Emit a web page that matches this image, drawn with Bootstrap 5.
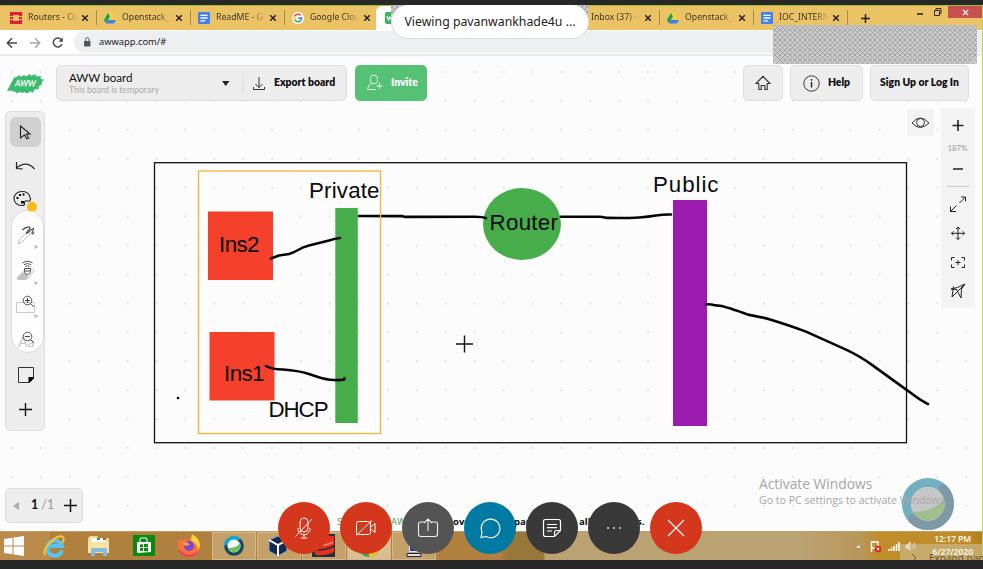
<!DOCTYPE html>
<html lang="en">
<head>
<meta charset="utf-8">
<meta name="viewport" content="width=device-width, initial-scale=1">
<title>AWW board</title>
<link rel="stylesheet" href="https://cdn.jsdelivr.net/npm/bootstrap@5.3.0/dist/css/bootstrap.min.css">
<style>
body{height:569px;width:983px;overflow:hidden;background:#272727;font-family:"Noto Sans","Open Sans",sans-serif;color:#111}
svg{display:block;flex-shrink:0}
.edge-top{height:5px}
.screen{height:555px;border-top:1px solid #9dc02c;border-right:1px solid #b4d84c;background:#fcfcfc}
.tabstrip{height:24px;background:#ebc365}
.tab-item{width:94px;padding-left:10px;position:relative;font-size:8.7px;color:#3d3828}
.tab-item .tab-label{width:49px;margin-left:6px;overflow:hidden;white-space:nowrap;-webkit-mask-image:linear-gradient(90deg,#000 75%,transparent)}
.tab-item .tab-x{margin-left:4px}
.tab-item.sep::after{content:"";position:absolute;right:-3px;top:4px;width:1px;height:15px;background:#a58d50}
.tab-live{width:187px;background:#fcfcfc;border-radius:6px 6px 0 0;padding-left:9px}
.win-close{width:34px;height:12px;background:#c75050}
.addr{height:26px;border-bottom:2px solid #e9ebec;background:#fff}
.omni{height:22px;background:#eeeff1;border-radius:11px 0 0 11px;font-size:9.3px;padding-left:9px;color:#222}
.board{height:475px;font-family:Lato,sans-serif}
.canvas{position:absolute;left:0;top:0}
.canvas text{font-family:"Liberation Sans",Arial,sans-serif;font-size:22.3px;fill:#0a0a0a}
.canvas .foot{font-family:"Open Sans",sans-serif;font-size:9.5px;font-weight:700}
.canvas .foot-link{fill:#3c9f55;font-weight:400}
.panel{background:#ededed;border:1px solid #dedede;border-radius:5px}
.topbar{height:36px;margin-top:9px;padding:0 13px 0 7px;font-size:10.4px;font-weight:800}
.board-name{font-size:11.6px;font-weight:400;line-height:13px}
.board-note{font-size:8.7px;font-weight:400;color:#aaa;line-height:12px}
.board-pick{width:291px;margin-left:12px}
.invite{background:#55c174;color:#fff;border-radius:5px;width:72px}
.tools{width:40px;height:320px;margin:10px 0 0 5px}
.tool-on{width:31px;height:30px;background:#d0d0d0;border-radius:6px;margin:5px 0 0 4px}
.tool-pill{width:33px;height:143px;background:#fdfdfd;border:1px solid #ddd;border-radius:17px;margin-left:5px;margin-top:-1px}
.soft{background:#f3f3f3}
.eye-btn{width:27px;height:27px;margin:8px 7px 0 0}
.zoomer{width:34px;height:200px;margin:7px 7px 0 0}
.pager{width:78px;height:35px;margin:57px 0 0 5px;font-size:12.5px;font-weight:700}
.page-total{color:#999;font-weight:400;margin-left:3px}
.taskbar{height:28.5px;border-top:1px solid #c49d63;background:linear-gradient(70deg,transparent 0 86%,#c08b20 89%,#b07f25 100%) right/160px 100% no-repeat,linear-gradient(90deg,#ba8b4a 0 50px,#b0803f 50px 500px,#98783a 508px 544px,#bba273 545px 800px,#b9975a 860px,#bf8d29 880px)}
.cell{width:45px;height:28px}
.cell.start{width:31.5px;padding-right:4px}
.cell.open{border:1px solid #d3b78c;background:#c6a069;width:44px;margin-right:1px}
.cell.open.current{background:#d8bf91}
.clock{font-size:8.5px;line-height:12.5px;color:#fff;font-family:"Open Sans",sans-serif;font-weight:600;position:relative;z-index:3}
.hatch{background-color:#cbcbcb;background-image:repeating-linear-gradient(45deg,#a3a3a3 0 .7px,transparent .7px 3.54px),repeating-linear-gradient(-45deg,#a3a3a3 0 .7px,transparent .7px 3.54px)}
.redact{position:absolute;left:773px;top:25px;width:204px;height:39px}
.viewing-wrap{position:absolute;left:391px;top:5px;width:197px;height:17px}
.viewing{position:absolute;left:391px;top:5px;width:198px;height:34px;border-radius:17px;background:#fff;border:1px solid #ddd;border-top:0;font-size:12.3px;white-space:nowrap;color:#222;padding-top:2px}
.call{position:absolute;left:278px;top:502px;gap:10px}
.round{width:52px;height:52px;border-radius:50%;background:#393939}
.round.red{background:#d4371c}.round.gray{background:#545454}.round.blue{background:#007aa3}
.wm{position:absolute;left:759px;top:475px;color:#a6a6a6;font-family:"Open Sans",sans-serif;line-height:17px;white-space:nowrap}
.wm-a{font-size:13.8px}.wm-b{font-size:10.6px}
.ball{position:absolute;left:902px;top:478px}
.expand{position:absolute;left:900px;top:544px;width:83px;height:16px;background:rgba(205,190,150,.6);font-size:10px;color:#6c5a31;overflow:hidden;white-space:nowrap;padding:8px 0 0 11px;gap:12px;line-height:13px}
</style>
<script src="https://cdn.jsdelivr.net/npm/bootstrap@5.3.0/dist/js/bootstrap.bundle.min.js"></script>
</head>
<body class="position-relative">
<svg width="0" height="0" class="position-absolute">
<defs>
<symbol id="x" viewBox="0 0 8 8"><path d="M1.2 1.2l5.6 5.6M6.8 1.2L1.2 6.8" stroke="#252018" stroke-width="1.5"/></symbol>
<symbol id="drive" viewBox="0 0 12 11"><path d="M4 0h4l-4 7-2 3.6L0 7z" fill="#12a15f"/><path d="M4 0h4l4 7H8z" fill="#fbcf44"/><path d="M4 7h8l-2 3.6H2z" fill="#4280e8"/><path d="M6 3.5L8 7H4z" fill="#ebc365"/></symbol>
<symbol id="doc" viewBox="0 0 12 12"><rect width="12" height="12" rx="1" fill="#4280ee"/><path d="M2.4 3.3h7.2M2.4 6h7.2M2.4 8.8h4.8" stroke="#fff" stroke-width="1.3"/></symbol>
</defs>
</svg>
<div class="edge-top"></div>
<div class="screen d-flex flex-column">
  <div class="tabstrip d-flex flex-shrink-0">
    <div class="tab-item sep d-flex align-items-center"><svg width="12" height="12" viewBox="0 0 12 12"><path d="M0 0h12v4H9V3H3v1H0zM0 5h3v2H0zM9 5h3v2H9zM0 8h3v1h6V8h3v4H0z" fill="#e11d39"/></svg><span class="tab-label">Routers - Op</span><svg class="tab-x" width="8" height="8"><use href="#x"/></svg></div>
    <div class="tab-item sep d-flex align-items-center"><svg width="12" height="11"><use href="#drive"/></svg><span class="tab-label">Openstack_I</span><svg class="tab-x" width="8" height="8"><use href="#x"/></svg></div>
    <div class="tab-item sep d-flex align-items-center"><svg width="12" height="12"><use href="#doc"/></svg><span class="tab-label">ReadME - Go</span><svg class="tab-x" width="8" height="8"><use href="#x"/></svg></div>
    <div class="tab-item d-flex align-items-center"><svg width="12" height="12" viewBox="0 0 12 12"><circle cx="6" cy="6" r="6" fill="#fff"/><g fill="none" stroke-width="1.6"><path d="M8.6 3.3A3.7 3.7 0 0 0 2.8 4.2" stroke="#ea4335"/><path d="M2.8 4.2a3.7 3.7 0 0 0 0 3.6" stroke="#fbbc05"/><path d="M2.8 7.8a3.7 3.7 0 0 0 5.6 1" stroke="#34a853"/><path d="M8.4 8.8A3.5 3.5 0 0 0 9.7 6.1H6.2" stroke="#4285f4"/></g></svg><span class="tab-label">Google Clou</span><svg class="tab-x" width="8" height="8"><use href="#x"/></svg></div>
    <div class="tab-live d-flex align-items-center"><svg width="12" height="12" viewBox="0 0 12 12"><rect width="12" height="12" rx="2" fill="#35b35e"/><path d="M2 4l1.500 4L5 5l1.500 3L9 3" fill="none" stroke="#fff" stroke-width="1.2"/></svg></div>
    <div class="tab-item sep d-flex align-items-center"><svg width="12" height="12"></svg><span class="tab-label">Inbox (37) - g</span><svg class="tab-x" width="8" height="8"><use href="#x"/></svg></div>
    <div class="tab-item sep d-flex align-items-center"><svg width="12" height="11"><use href="#drive"/></svg><span class="tab-label">Openstack_I</span><svg class="tab-x" width="8" height="8"><use href="#x"/></svg></div>
    <div class="tab-item sep d-flex align-items-center"><svg width="12" height="12"><use href="#doc"/></svg><span class="tab-label">IOC_INTERN</span><svg class="tab-x" width="8" height="8"><use href="#x"/></svg></div>
    <div class="d-flex align-items-center ps-3"><svg class="ms-n1" width="9" height="9" viewBox="0 0 9 9"><path d="M4.500 0v9M0 4.500h9" stroke="#252018" stroke-width="1.500"/></svg></div>
    <div class="ms-auto d-flex align-items-start"><svg class="me-1" width="30" height="14" viewBox="0 0 30 14"><path d="M3 8h6" stroke="#332a18" stroke-width="1.600"/><path d="M20.500 4.500h5v5h-5zM22 4.500v-2h5v5h-1.500" fill="none" stroke="#332a18"/></svg><div class="win-close d-flex align-items-center justify-content-center"><svg width="7" height="7" viewBox="0 0 8 8"><path d="M1 1l6 6M7 1L1 7" stroke="#fff" stroke-width="1.600"/></svg></div></div>
  </div>
  <div class="addr d-flex align-items-center flex-shrink-0">
    <svg width="74" height="22" viewBox="0 0 74 22" fill="none" stroke-width="1.500"><path d="M17 12H7.500M12 7.300L7.300 12l4.700 4.700" stroke="#47494c"/><path d="M30 12h9.500M35 7.300l4.700 4.700-4.700 4.700" stroke="#a5a7aa"/><path d="M61.600 9A4.500 4.500 0 1 0 62 13" stroke="#47494c"/><path d="M62.800 6.500v4.200h-4.200z" fill="#47494c" stroke="none"/></svg>
    <div class="omni flex-grow-1 d-flex align-items-center"><svg width="8" height="10" viewBox="0 0 8 10"><rect x="1" y="4" width="6.500" height="5.500" rx=".7" fill="#555"/><path d="M2.500 4V2.500a1.700 1.700 0 0 1 3.500 0V4" fill="none" stroke="#555"/></svg><span class="ms-2">awwapp.com/#</span></div>
  </div>
  <div class="board position-relative flex-shrink-0">
    <svg class="canvas" width="982" height="475" viewBox="0 56 982 475">
      <defs><pattern id="dots" x="11" y="71" width="28.920" height="28.920" patternUnits="userSpaceOnUse"><path d="M0 .2h1.600v1.600H0z" fill="#d6d6d6"/></pattern></defs>
      <rect y="68" width="982" height="463" fill="url(#dots)"/>
      <rect x="154.500" y="162.700" width="752" height="280" fill="none" stroke="#111" stroke-width="1.300"/>
      <path fill="#f5402c" d="M208 211.500h65v68.500h-65zM209.500 332h65v68.500h-65z"/>
      <path fill="#47ad4a" d="M335.300 208h22.500v215h-22.500z"/>
      <ellipse cx="522" cy="224" rx="39" ry="36" fill="#47ad4a"/>
      <path fill="#9b1bae" d="M673 200h34v226h-34z"/>
      <g fill="none" stroke="#050505" stroke-width="2.600" stroke-linecap="round" stroke-linejoin="round">
        <path d="M271 258.500q4-1.500 8-3l10-1.500q4-1 9-4t11-4.500l20-5q6-2 11-2.500"/>
        <path d="M266 366q6 3.500 17 3.500 15 1 26 4.500 14 5 21 5.700 8 .8 14 0l.5-1.500"/>
        <path d="M359 216l43 .1 3 .8 70-.2q8 0 11 1.500"/>
        <path d="M561 216.700h39q4 .3 7 1.200 30 .8 49-2.400 8-1.200 15-1"/>
        <path d="M706 304.300q5-.2 8 .8 8 .3 15 3 12 4 19 6.500 14 2.500 22 5 15 4.500 36 12 20 9 40 18 15 7 27 16l36 26q10 8 19 12.500"/>
      </g>
      <path d="M456 344h17M464.500 335.500v17" stroke="#111" stroke-width="1.400"/>
      <circle cx="178" cy="398" r="1.300"/>
      <text x="309" y="197.800" textLength="70.500">Private</text>
      <text x="653" y="192" textLength="65.500">Public</text>
      <text x="489.500" y="229.800" textLength="68.500">Router</text>
      <text x="219" y="251.500" textLength="40.500">Ins2</text>
      <text x="224" y="380.900" textLength="40.500">Ins1</text>
      <text x="268.500" y="416.800" textLength="60">DHCP</text>
      <rect x="198.500" y="171" width="182" height="262.500" fill="none" stroke="#f2b631" stroke-width="1.300"/>
      <text class="foot foot-link" x="337" y="524.500">S</text><text class="foot foot-link" x="391" y="524.500">AW</text>
      <text class="foot" x="453" y="524.500">ove</text><text class="foot" x="514" y="524.500">par</text><text class="foot" x="579" y="524.500">all</text><text class="foot" x="637" y="524.500">s.</text>
    </svg>
    <div class="position-relative">
      <div class="topbar d-flex align-items-center">
        <svg width="37" height="20" viewBox="0 0 37 20"><path d="M0 18L7 4.500l3-.5q1-2 2-1.500l2.500 1.200L17 2l2 1.500L23 1l1.500 2 4-2 .5 2.500 5-.5-.5 3 3.500.5-2.500 3 .5 2-3.500 2 .5 2.500-4.500.5-2 3.500-2.500-2-3 3-2-2-3.500 1-1.500-1.500-3 2-2-2-3 .5L7 19l-2-1.500z" fill="#39bb70"/><text x="8" y="13.500" transform="rotate(2 18 10)" font-family="Lato,sans-serif" font-size="9" font-weight="700" font-style="italic" fill="#fff" textLength="21" lengthAdjust="spacingAndGlyphs">AWW</text></svg>
        <div class="panel board-pick h-100 d-flex align-items-center ps-2">
          <div style="width:152px" class="ms-1"><div class="board-name">AWW board</div><div class="board-note">This board is temporary</div></div>
          <svg width="53" height="30" viewBox="0 0 53 30"><path d="M1 13h7.500L4.700 18z" fill="#222"/><path d="M22 5v20" stroke="#ddd"/><path d="M38 9v10.500M34.500 16l3.500 3.600 3.500-3.600M32.500 19v2.500h11V19" fill="none" stroke="#333"/></svg>
          <span class="text-nowrap">Export board</span>
        </div>
        <div class="invite h-100 d-flex align-items-center ms-2 ps-2"><svg class="ms-1" width="16" height="18" viewBox="0 0 16 18" fill="none" stroke="#e8ffee" stroke-width="1"><ellipse cx="7" cy="5.500" rx="3.600" ry="4.300"/><path d="M5.500 9.300q-4.500 1.200-4.800 6.200H9M12.500 9v6M9.500 12h6"/></svg><span class="ms-2">Invite</span></div>
        <div class="ms-auto panel h-100 d-flex align-items-center justify-content-center" style="width:40px"><svg width="16" height="16" viewBox="0 0 16 16" fill="none" stroke="#333" stroke-width="1.100"><path d="M1 8.500L8 1.300l7 7.200h-2.800v6H9.800v-4H6.200v4H3.800v-6z"/></svg></div>
        <div class="panel h-100 d-flex align-items-center justify-content-center mx-2" style="width:73px;margin:0 7px!important"><svg width="17" height="17" viewBox="0 0 17 17"><circle cx="8.500" cy="8.500" r="7.700" fill="none" stroke="#333"/><path d="M8.500 4v1.700M8.500 7v5.500" stroke="#222" stroke-width="1.400"/></svg><span class="ms-2">Help</span></div>
        <div class="panel h-100 d-flex align-items-center justify-content-center" style="width:99px">Sign Up or Log In</div>
      </div>
      <div class="d-flex align-items-start">
        <div class="tools panel">
          <div class="tool-on d-flex justify-content-center align-items-center"><svg width="13" height="15" viewBox="0 0 13 15"><path d="M1.500 1l9.500 8H7.500l2.200 4-2 .9-2-4-4.200 3z" fill="none" stroke="#222" stroke-width="1.100"/></svg></div>
          <svg width="38" height="64" viewBox="0 0 38 64"><path d="M10.500 21q10-8 18 1M10.500 15v6.500l6 .3" fill="none" stroke="#222" stroke-width="1.200"/><path d="M16 44.500c-5 0-8 3.200-8 7s3 7 7.500 7c4 0 3-1.500 3-3s1.500-2 3-1.500c3 1 3.500-1.500 2.500-4-1-3.500-4-5.500-8-5.500z" fill="none" stroke="#222" stroke-width="1.100"/><path d="M10.500 50h2v2h-2zM13 47h2v2h-2zM16.500 46.500h2v2h-2zM15 54h3v2.500h-3z"/><circle cx="26" cy="60" r="5" fill="#fbba10"/></svg>
          <div class="tool-pill">
            <svg width="31" height="141" viewBox="0 0 31 141" fill="none">
              <path d="M6 33l1.500-4.500 8-8 2.500 2.500-8 8z" stroke="#c4c4c4"/><path d="M10.500 19c3-3 8-4 7.500-2s-4.500 5-3.500 5.500c2 0 6-6 7-5s-2.500 4-1.500 5 1.500-.5 2-1.500" stroke="#444" stroke-width="1.100"/>
              <path d="M22.500 34l4 2-4 2zM22.500 70l4 2-4 2zM22.500 103l4 2-4 2z" fill="#bbb"/>
              <path d="M4.500 67l6-6 6.500 4-2.500 4H6z" fill="#c2c2c2"/><path d="M10.500 61l6-4.500 5.500 3-5 7.500" stroke="#ccc"/><path d="M12.500 57.500h6v3q0 3-3 3t-3-3zM12.500 60h6M13.500 55.500q2-1.500 4 0M12 53.700q3.500-2.500 7 0M10.500 52q5-3.500 10 0" stroke="#555"/>
              <path d="M4.500 91.500h18v10h-18z" stroke="#c9c9c9"/><circle cx="15.500" cy="89.500" r="4.300" stroke="#555"/><path d="M13 89.500h5M15.500 87v5M18.500 92.500l3.500 3.500" stroke="#444"/>
              <text x="6" y="136" font-family="Lato,sans-serif" font-size="14" fill="#c4c4c4">Aa</text><circle cx="15.500" cy="125.500" r="4.300" stroke="#555"/><path d="M13 125.500h5M18.500 128.500l3.500 3.500" stroke="#444"/>
            </svg>
          </div>
          <svg width="38" height="75" viewBox="0 0 38 75"><path d="M12.500 14.500h15v11l-4 4h-11z" fill="none" stroke="#333"/><path d="M27.500 24v1.500l-4 4h-1V24z" fill="#000"/><path d="M19.500 50v13M13 56.500h13" stroke="#111" stroke-width="1.400"/></svg>
        </div>
        <div class="soft eye-btn d-flex align-items-center justify-content-center ms-auto"><svg width="19" height="12" viewBox="0 0 19 12" fill="none" stroke="#333"><path d="M1 6q8-10 17 0-9 9-17 0z"/><circle cx="9.500" cy="5.500" r="4"/></svg></div>
        <div class="soft zoomer"><svg width="34" height="200" viewBox="0 0 34 200" fill="none" stroke="#222"><path d="M11.500 17.500h11M17 12v11M12 61h10" stroke-width="1.600"/><text x="6.500" y="43" font-size="8" fill="#999" stroke="none" font-family="Lato,sans-serif" textLength="20">187%</text><path d="M6 78.500h22" stroke="#ccc"/><path d="M18.500 95l6-6M20 89h4.500v4.500M9.500 103.500l6-6M9.500 98.500v5H15"/><path d="M17 119v12.500M10.500 125.300h13M15 121l2-2 2 2M15 129.500l2 2 2-2M12.500 123.300l-2 2 2 2M21.500 123.300l2 2-2 2"/><path d="M10.500 152.500v-3h3M20.500 149.500h3v3M23.500 156.500v3h-3M13.500 159.500h-3v-3M17 152v5M14.500 154.500h5"/><path d="M10 181l5.500.5L20 190l.5-9L24 176l-7.500 3.500L10 181M24 176l-13 13 1.500-10.500" stroke-width="1"/></svg></div>
      </div>
      <div class="panel pager d-flex align-items-center"><svg width="25" height="16"><path d="M13 4v8L7 8z" fill="#aaa"/></svg><span>1</span><span class="page-total">/1</span><svg class="ms-auto me-1" width="15" height="15" viewBox="0 0 15 15"><path d="M7.500 1v13M1 7.500h13" stroke="#111" stroke-width="1.500"/></svg></div>
    </div>
  </div>
  <div class="taskbar d-flex align-items-center flex-shrink-0">
    <div class="cell start d-flex align-items-center justify-content-center"><svg width="20" height="20" viewBox="0 0 20 20"><path d="M0 3l8.500-1.300V9.500H0zM9.500 1.500L20 0v9.500H9.500zM0 10.500h8.500v7.800L0 17zM9.500 10.500H20V20L9.500 18.500z" fill="#fff"/></svg></div>
    <div class="cell d-flex align-items-center justify-content-center"><svg width="24" height="24" viewBox="0 0 24 24" fill="none"><path d="M20 16.500A7.500 7.500 0 1 1 20 12H7" stroke="#55c4f2" stroke-width="4"/><path d="M3 21C-1 15 15-1 21 3c2 2 0 5-1 6" stroke="#f5c52c" stroke-width="2"/></svg></div>
    <div class="cell d-flex align-items-center justify-content-center"><svg width="24" height="22" viewBox="0 0 24 22"><path d="M1 3l2-2h7l1 2h11v15H1z" fill="#f5dc8c"/><path d="M4 3h15v4H4z" fill="#fff"/><path d="M10 4h3" stroke="#38a648" stroke-width="2"/><path d="M16 4h3" stroke="#dd4b39" stroke-width="2"/><path d="M1 7h21v11H1z" fill="#f7e3a4"/><path d="M4 21v-6q0-2 2-2h12q2 0 2 2v6h-4v-4H8v4z" fill="#80bce3"/></svg></div>
    <div class="cell d-flex align-items-center justify-content-center"><svg width="22" height="21" viewBox="0 0 22 21"><path d="M0 0h22v21H0z" fill="#0b8a12"/><path d="M4 7h14v10L4 18z" fill="#fff"/><path d="M7 7V4q0-1 1-1h5q1 0 1 1v3" fill="none" stroke="#fff"/><path d="M7 9.500l3-.3v3H7zM11 9l4-.3v3.500h-4zM7 13h3v3l-3-.3zM11 13h4v3.500l-4-.4z" fill="#0b8a12"/></svg></div>
    <div class="cell d-flex align-items-center justify-content-center"><svg width="24" height="23" viewBox="0 0 24 23"><path d="M2 5l3 2 3-3 1 3 5-4 1-3q8 5 8 12c0 7-5 11-11 11S1 19 1 12z" fill="#ff7139"/><path d="M15 0q8 5 8 12l-2 4c-1-7-5-8-7-10z" fill="#ffd23d"/><path d="M1 12c1 9 15 13 21 4-2 9-21 10-21-4z" fill="#ee2a67"/><circle cx="12" cy="12" r="5" fill="#7648d5"/><path d="M5 8q5-1 8 3l-5 1z" fill="#ff9640"/></svg></div>
    <div class="cell open d-flex align-items-center justify-content-center"><svg width="20" height="20" viewBox="0 0 20 20"><circle cx="10" cy="10" r="9.800" fill="#164a64"/><path d="M.2 10A9.800 9.800 0 0 1 17 3z" fill="#12a9d1"/><circle cx="10" cy="10" r="6.500" fill="#fff"/><path d="M16 7a6.500 6.500 0 0 1-12 5q9 0 12-5z" fill="#65c654"/></svg></div>
    <div class="cell open d-flex align-items-center justify-content-center"><svg width="21" height="22" viewBox="0 0 21 22"><path d="M10 1l9 4v11l-9 5-9-5V5z" fill="#132b50" stroke="#93aac6"/><path d="M1 5l9 5 9-5M10 10v11" stroke="#fff" stroke-width="2" fill="none"/></svg></div>
    <div class="cell open d-flex align-items-center justify-content-center"><svg width="23" height="23" viewBox="0 0 23 23"><path d="M0 0h23v23H0z" fill="#232f3c"/><path d="M1 2h21v9q-8 5-21 4zM2 17q12 0 20-4v5q-8 4-18 3z" fill="#e5301e"/><path d="M9 11q7 0 12-3" stroke="#ff8a70" stroke-width="1.500" fill="none"/></svg></div>
    <div class="cell open current d-flex align-items-center justify-content-center"><svg width="22" height="22" viewBox="0 0 22 22"><circle cx="11" cy="11" r="11" fill="#35a853"/><path d="M11 22A11 11 0 0 0 21 7H11z" fill="#fbc116"/><path d="M1.500 6a11 11 0 0 1 19 0H11z" fill="#ea4335"/><circle cx="11" cy="11" r="5" fill="#4285f4" stroke="#fff"/></svg></div>
    <div class="cell open d-flex align-items-center justify-content-center"><svg width="18" height="22" viewBox="0 0 18 22"><path d="M4.500 9.500h9v7h-9z" fill="#1737b8" stroke="#eee"/><path d="M2 18.500h14v3H2z" fill="#ddd" stroke="#225"/><path d="M9 2l-4 6h4l-2 4" stroke="#ee3" fill="none"/></svg></div>
    <div class="ms-auto d-flex align-items-center" style="padding-right:9px"><svg class="me-3" width="62" height="18" viewBox="0 0 62 18"><path d="M1.500 11L4.500 8l3 3z" fill="#fff" stroke="#765" stroke-width=".4"/><path d="M17.500 4v11M18 5h6v6h-6" fill="none" stroke="#fff" stroke-width="1.400"/><circle cx="24" cy="12" r="3.300" fill="#d92424"/><path d="M22.700 10.700l2.600 2.600m0-2.600l-2.600 2.600" stroke="#fff"/><path d="M35 14v-2M37.500 14v-3.500M40 14V9M42.500 14V7M45 14V5" stroke="#fff" stroke-width="1.600"/><path d="M51.500 7.500h2l3-3v10l-3-3h-2z" fill="#fff"/><path d="M58 7.500q1.500 2 0 4M60 6q2.500 3.500 0 7" fill="none" stroke="#fff"/></svg>
      <div class="clock text-center"><div>12:17 PM</div><div>6/27/2020</div></div></div>
  </div>
</div>

<div class="redact hatch"></div>
<div class="viewing-wrap hatch"></div>
<div class="viewing d-flex align-items-center justify-content-center">Viewing pavanwankhade4u ...</div>
<svg class="ball" width="52" height="52" viewBox="0 0 52 52" opacity=".85"><circle cx="26" cy="26" r="17" fill="#bdbdbd"/><path d="M42 21a17 17 0 0 1-31 13q21 0 31-13z" fill="#8fb578"/><circle cx="26" cy="26" r="21.500" fill="none" stroke="#5aa3b5" stroke-width="9"/><path d="M41 10.500A21.500 21.500 0 0 1 10.500 41" fill="none" stroke="#6a8796" stroke-width="9" stroke-linecap="round"/></svg>
<div class="wm"><div class="wm-a">Activate Windows</div><div class="wm-b">Go to PC settings to activate Windows.</div></div>
<div class="expand d-flex"><svg width="6" height="12" viewBox="0 0 6 12"><path d="M1 2l4 4-4 4" fill="none" stroke="#6c5a31"/></svg><span>Expand pane</span></div>
<div class="call d-flex">
  <div class="round red d-flex align-items-center justify-content-center"><svg width="22" height="22" viewBox="0 0 22 22" fill="none" stroke="#fff"><rect x="7" y="1" width="8" height="14" rx="4"/><path d="M5 11c0 9 12 9 12 0M11 18v3M8 21h6M2.500 19.500L19 2"/></svg></div>
  <div class="round red d-flex align-items-center justify-content-center"><svg width="22" height="22" viewBox="0 0 22 22" fill="none" stroke="#fff"><rect x="1.500" y="4.500" width="14" height="13" rx="2"/><path d="M15.500 10l4.500-3.500v9L15.500 12M1 18.500L17 3.500"/></svg></div>
  <div class="round gray d-flex align-items-center justify-content-center"><svg width="22" height="22" viewBox="0 0 22 22" fill="none" stroke="#eee" stroke-width="1.100"><path d="M7 5H3.500Q1.500 5 1.500 7v10q0 2.500 2.500 2.500h14q2.500 0 2.500-2.500V7q0-2-2-2H15M11 14V2M7 6l4-4 4 4"/></svg></div>
  <div class="round blue d-flex align-items-center justify-content-center"><svg width="22" height="22" viewBox="0 0 22 22" fill="none" stroke="#fff" stroke-width="1.100"><path d="M2 20.500l1-5.500a9.300 9.300 0 1 1 4 4.500z"/></svg></div>
  <div class="round d-flex align-items-center justify-content-center"><svg width="20" height="20" viewBox="0 0 20 20" fill="none" stroke="#fff" stroke-width="1.200"><path d="M3.500 1.500h13q2 0 2 2v9l-6 6h-9q-2 0-2-2v-13q0-2 2-2zM18 12.500h-3.500q-2 0-2 2V18M5 6.500h10M5 9.700h10M5 13h5"/></svg></div>
  <div class="round d-flex align-items-center justify-content-center"><svg width="16" height="4" viewBox="0 0 16 4" fill="#ddd"><circle cx="2" cy="2" r="1"/><circle cx="8" cy="2" r="1"/><circle cx="14" cy="2" r="1"/></svg></div>
  <div class="round red d-flex align-items-center justify-content-center"><svg width="18" height="18" viewBox="0 0 18 18"><path d="M1 1l16 16M17 1L1 17" stroke="#fff" stroke-width="1.200"/></svg></div>
</div>
</body>
</html>
